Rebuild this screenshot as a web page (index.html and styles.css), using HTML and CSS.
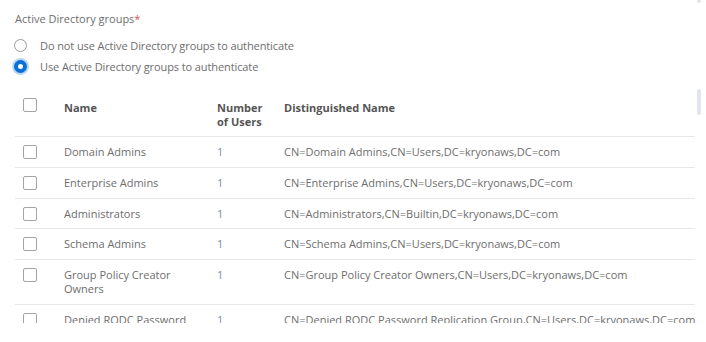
FILE: index.html
```html
<!DOCTYPE html>
<html lang="en">
<head>
	<meta charset="UTF-8">
	<title>Active Directory groups</title>
	<link rel="stylesheet" href="styles.css">
</head>
<body>
	<div class="page-thumb"></div>
	<div class="field">
		<div class="field-label">Active Directory groups<span class="req">*</span></div>
		<div class="radio-list">
			<div class="radio-row">
				<span class="radio"></span>
				<span>Do not use Active Directory groups to authenticate</span>
			</div>
			<div class="radio-row">
				<span class="radio checked"></span>
				<span>Use Active Directory groups to authenticate</span>
			</div>
		</div>
	</div>

	<div class="table-wrap">
		<table class="groups">
			<thead>
				<tr>
					<th class="col-check"><span class="checkbox"></span></th>
					<th class="col-name">Name</th>
					<th class="col-num">Number<br>of Users</th>
					<th>Distinguished Name</th>
				</tr>
			</thead>
			<tbody>
				<tr>
					<td class="col-check"><span class="checkbox"></span></td>
					<td>Domain Admins</td>
					<td class="num">1</td>
					<td class="dn">CN=Domain Admins,CN=Users,DC=kryonaws,DC=com</td>
				</tr>
				<tr>
					<td class="col-check"><span class="checkbox"></span></td>
					<td>Enterprise Admins</td>
					<td class="num">1</td>
					<td class="dn">CN=Enterprise Admins,CN=Users,DC=kryonaws,DC=com</td>
				</tr>
				<tr>
					<td class="col-check"><span class="checkbox"></span></td>
					<td>Administrators</td>
					<td class="num">1</td>
					<td class="dn">CN=Administrators,CN=Builtin,DC=kryonaws,DC=com</td>
				</tr>
				<tr>
					<td class="col-check"><span class="checkbox"></span></td>
					<td>Schema Admins</td>
					<td class="num">1</td>
					<td class="dn">CN=Schema Admins,CN=Users,DC=kryonaws,DC=com</td>
				</tr>
				<tr>
					<td class="col-check"><span class="checkbox"></span></td>
					<td>Group Policy Creator Owners</td>
					<td class="num">1</td>
					<td class="dn">CN=Group Policy Creator Owners,CN=Users,DC=kryonaws,DC=com</td>
				</tr>
				<tr>
					<td class="col-check"><span class="checkbox"></span></td>
					<td>Denied RODC Password Replication Group</td>
					<td class="num">1</td>
					<td class="dn">CN=Denied RODC Password Replication Group,CN=Users,DC=kryonaws,DC=com</td>
				</tr>
			</tbody>
		</table>
		<div class="scroll-thumb"></div>
	</div>
</body>
</html>
```

FILE: styles.css
```css
body {
	margin: 0;
	background: #ffffff;
	font-family: "Open Sans", "Liberation Sans", sans-serif;
	font-size: 11px;
	color: #6e6e6e;
	position: relative;
	height: 342px;
	overflow: hidden;
}

.page-thumb {
	position: absolute;
	left: 697px;
	top: 0;
	width: 4px;
	height: 3px;
	background: #e2e4ee;
	border-radius: 0 0 2px 2px;
}

.field {
	padding: 11px 0 0 15px;
}

.field-label {
	line-height: 16px;
}

.req {
	color: #d9534f;
}

.radio-list {
	margin-top: 11px;
	display: flex;
	flex-direction: column;
	gap: 6px;
}

.radio-row {
	display: flex;
	align-items: center;
	gap: 13px;
	line-height: 15px;
	letter-spacing: -0.1px;
}

.radio {
	width: 11px;
	height: 11px;
	border: 1px solid #9a9a9a;
	border-radius: 50%;
	box-sizing: content-box;
	margin-left: -1px;
}

.radio.checked {
	width: 5px;
	height: 5px;
	border: 4px solid #0a6fd6;
	background: #ffffff;
	box-shadow: 0 0 0 2px #b9d6f6;
}

.table-wrap {
	position: relative;
	margin: 11px 0 0 15px;
	width: 686px;
	height: 238px;
	overflow: hidden;
}

.groups {
	width: 680px;
	border-collapse: collapse;
	table-layout: fixed;
}

.groups th {
	text-align: left;
	font-weight: 700;
	color: #555555;
	vertical-align: top;
	padding: 16px 0 7px 0;
	line-height: 14px;
	height: 28px;
	border-bottom: 1px solid #e8e8e8;
}

.groups td {
	vertical-align: top;
	padding: 8px 0 7.75px 0;
	line-height: 14px;
	border-bottom: 1px solid #e8e8e8;
}

.groups td.col-check {
	padding-top: 8px;
}

.groups th.col-check {
	padding-top: 13px;
}

.col-check {
	width: 49px;
}

.col-name {
	width: 153px;
}

.col-num {
	width: 67px;
}

.groups td:nth-child(2) {
	padding-right: 22px;
}

.dn {
	white-space: nowrap;
}

.num {
	color: #7a8aa6;
	padding-left: 1px;
}

.checkbox {
	display: block;
	width: 12px;
	height: 12px;
	margin-left: 8px;
	border: 1px solid #a4a4a4;
	border-radius: 2px;
	background: #ffffff;
}

.scroll-thumb {
	position: absolute;
	left: 682px;
	top: 4px;
	width: 4px;
	height: 26px;
	background: #e2e4ee;
	border-radius: 2px;
}
```
